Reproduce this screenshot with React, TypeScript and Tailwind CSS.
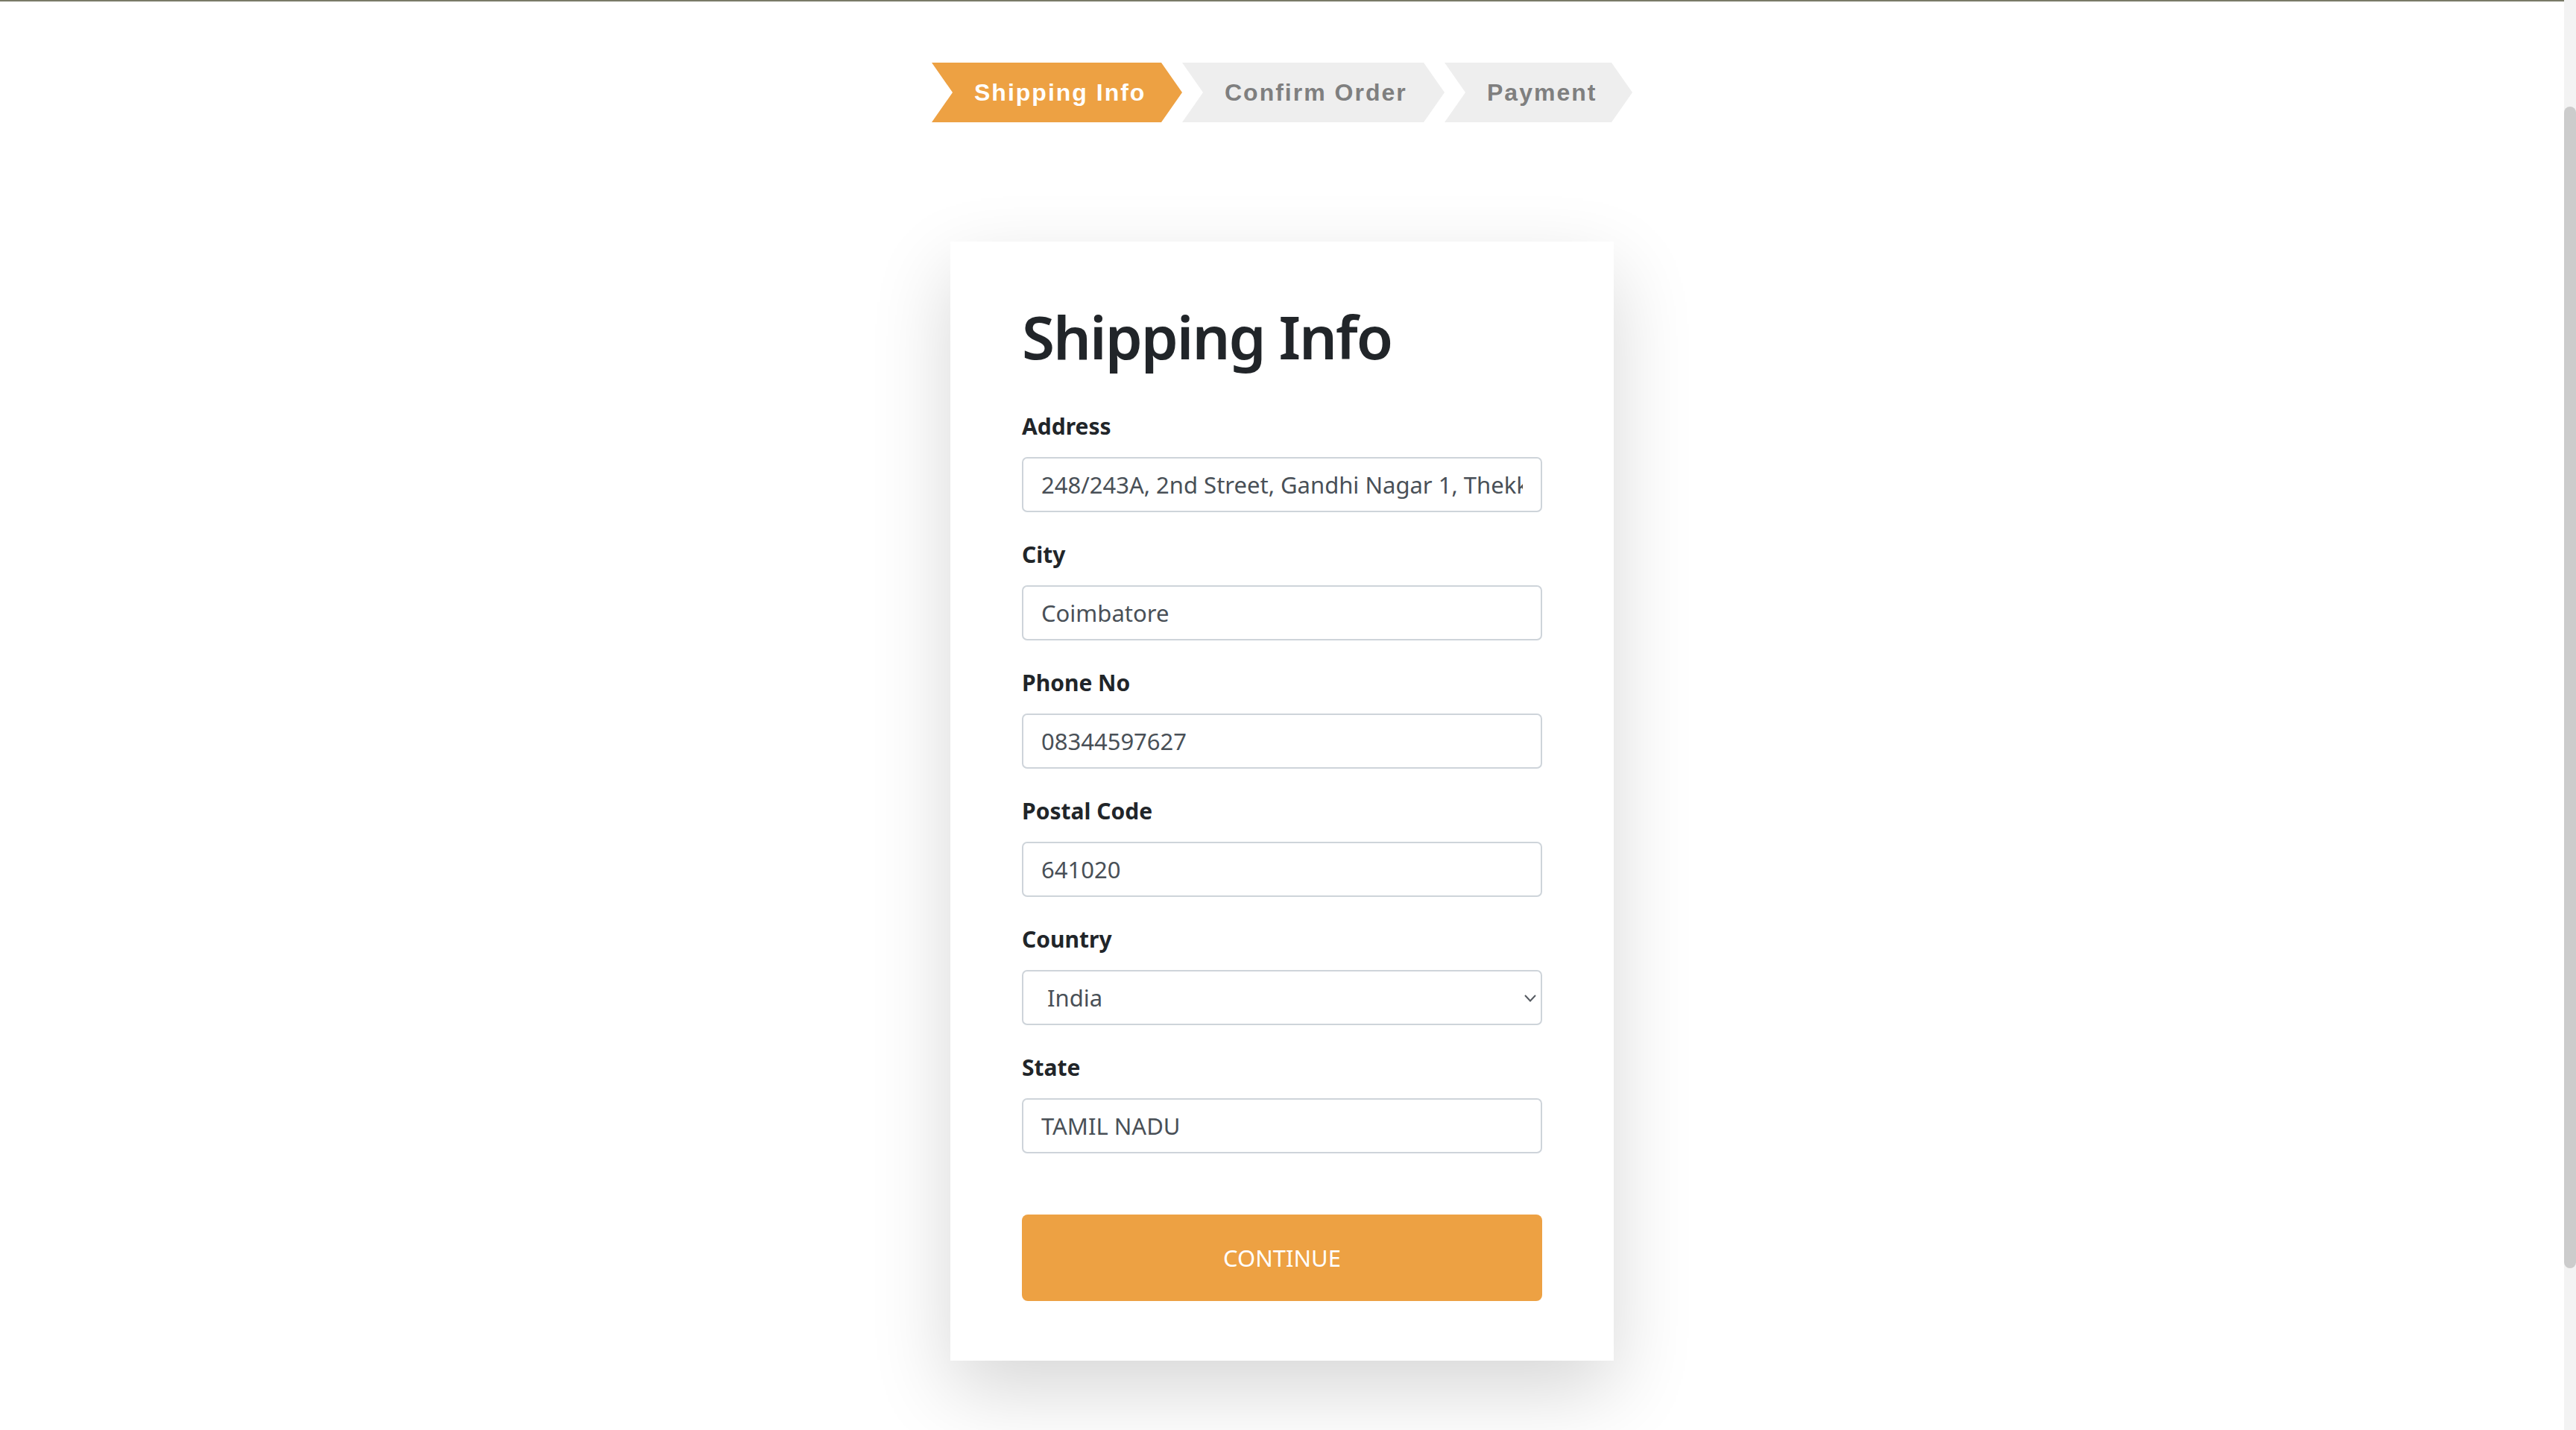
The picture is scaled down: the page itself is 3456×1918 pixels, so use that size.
import React from 'react';

const chevron =
  '[clip-path:polygon(0_0,calc(100%_-_28px)_0,100%_50%,calc(100%_-_28px)_100%,0_100%,28px_50%)]';

const steps = [
  { label: 'Shipping Info', width: 'w-[336px]', active: true },
  { label: 'Confirm Order', width: 'w-[352px]', active: false },
  { label: 'Payment', width: 'w-[252px]', active: false },
];

const fields = [
  { label: 'Address', value: '248/243A, 2nd Street, Gandhi Nagar 1, Thekkalur, Avinashi' },
  { label: 'City', value: 'Coimbatore' },
  { label: 'Phone No', value: '08344597627' },
  { label: 'Postal Code', value: '641020' },
];

function Stepper() {
  return (
    <div className="flex h-[80px] font-['Liberation_Sans',Arial,sans-serif]">
      {steps.map((s) => (
        <div
          key={s.label}
          className={`${s.width} ${chevron} flex h-full items-center pl-[57px] text-[32px] font-bold tracking-[2px] ${
            s.active ? 'bg-[#eda143] text-white' : 'bg-[#eeeeee] text-[#7f7f7f]'
          }`}
        >
          {s.label}
        </div>
      ))}
    </div>
  );
}

function Field({ label, children }: { label: string; children: React.ReactNode }) {
  return (
    <div className="mb-[35px] flex flex-col">
      <label className="mb-[19px] text-[30px] font-bold leading-[44px] text-[#212529]">{label}</label>
      {children}
    </div>
  );
}

const inputCls =
  'h-[74px] w-full rounded-[7px] border-2 border-[#ced4da] bg-white px-[24px] text-[31px] text-[#495057] outline-none';

export default function App() {
  return (
    <div className="flex h-[1918px] w-full overflow-hidden bg-white">
      <div className="flex flex-1 flex-col items-center">
        <div className="h-[2px] w-full bg-[#7a7b68]" />

        <div className="mt-[82px]">
          <Stepper />
        </div>

        <form
          className="mt-[160px] flex w-[890px] flex-col bg-white px-[96px] pb-[80px] pt-[78px] font-['Noto_Sans',sans-serif] shadow-[0_40px_100px_rgba(0,0,0,0.16)]"
          onSubmit={(e) => e.preventDefault()}
        >
          <h1 className="mb-[50px] text-[80px] font-semibold leading-[98px] tracking-[-2px] text-[#212529]">
            Shipping Info
          </h1>

          {fields.map((f) => (
            <Field key={f.label} label={f.label}>
              <input className={inputCls} defaultValue={f.value} />
            </Field>
          ))}

          <Field label="Country">
            <div className="relative">
              <select
                className="h-[74px] w-full appearance-none rounded-[7px] border-2 border-[#ced4da] bg-white pl-[32px] pr-[40px] text-[31px] text-[#495057] outline-none"
                defaultValue="IN"
              >
                <option value="IN">India</option>
              </select>
              <svg
                className="pointer-events-none absolute right-[8px] top-[33px]"
                width="16"
                height="10"
                viewBox="0 0 16 10"
                fill="none"
              >
                <path d="M1 1l7 7.5L15 1" stroke="#555a60" strokeWidth="2" />
              </svg>
            </div>
          </Field>

          <Field label="State">
            <input className={inputCls} defaultValue="TAMIL NADU" />
          </Field>

          <button
            type="submit"
            className="mt-[47px] h-[116px] w-full rounded-[8px] bg-[#eda143] text-[31px] text-white"
          >
            CONTINUE
          </button>
        </form>
      </div>

      <div className="flex w-[16px] flex-col bg-[#f3f3f3]">
        <div className="mt-[143px] h-[1558px] rounded-full bg-[#cccccc]" />
      </div>
    </div>
  );
}
